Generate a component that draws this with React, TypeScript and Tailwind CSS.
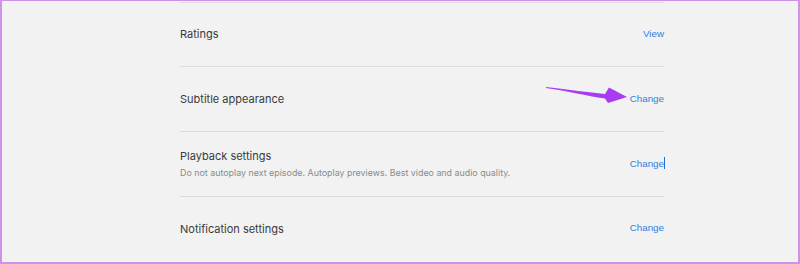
import React from 'react';

type Row = { title: string; desc?: string; action: string };

const rows: Row[] = [
  { title: 'Ratings', action: 'View' },
  { title: 'Subtitle appearance', action: 'Change' },
  { title: 'Playback settings', desc: 'Do not autoplay next episode. Autoplay previews. Best video and audio quality.', action: 'Change' },
  { title: 'Notification settings', action: 'Change' },
];

function Arrow() {
  return (
    <svg className="absolute left-[-90px] top-[-7px]" width="90" height="24" viewBox="0 0 90 24">
      <path d="M6 2 C30 5 48 7 65 9 L69 2.5 L87 12 L68 18 L65 13.5 C46 11 28 6 6 3 Z" fill="#a93cf2" />
    </svg>
  );
}

export default function App() {
  return (
    <div className="w-[800px] h-[264px] bg-[#f2f2f2] border-2 border-[#cd93ea] border-t-[1.5px] overflow-hidden" style={{ fontFamily: 'Inter, "Noto Sans", sans-serif' }}>
      <div className="ml-[178px] w-[484px] pt-[0.5px]">
        {rows.map((r, i) => (
          <div key={r.title} className="h-[64.75px] border-t border-[#dcdcdc] flex items-center justify-between">
            <div className="flex flex-col pt-[1px]">
              <span className="text-[11px] leading-[15px] text-[#3a3a3a]">{r.title}</span>
              {r.desc && <span className="text-[8.9px] leading-[12px] text-[#8a8a8a] mt-[3px]">{r.desc}</span>}
            </div>
            <span className="relative text-[9.8px] text-[#2f7fe0]" style={{ fontFamily: '"Liberation Sans", Arial, sans-serif' }}>
              {i === 1 && <Arrow />}
              {r.action}
              {i === 2 && <span className="absolute right-[-1px] top-[0px] w-[1px] h-[12px] bg-[#1f6fd6]" />}
            </span>
          </div>
        ))}
      </div>
    </div>
  );
}
